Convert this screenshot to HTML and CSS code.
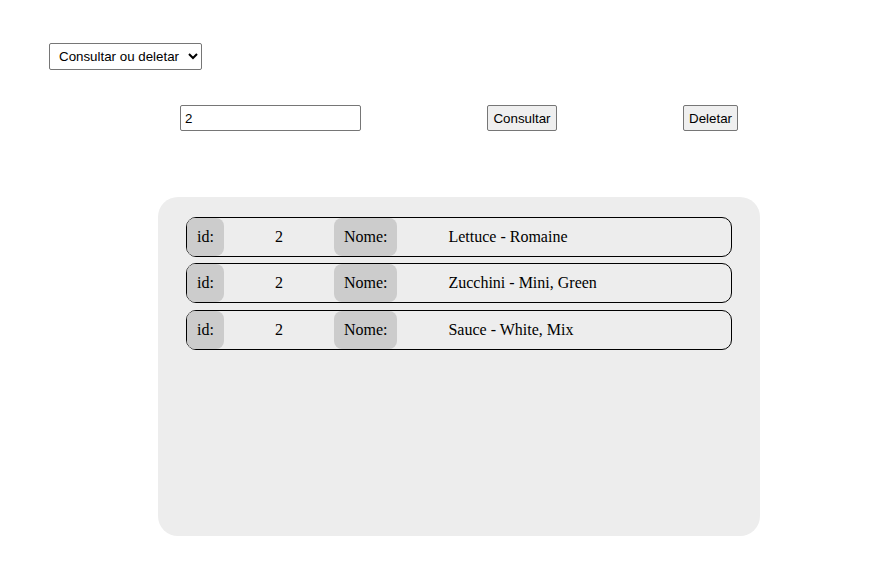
FILE: index.html
```html
<!DOCTYPE html>
<html>
<head>
<meta charset="utf-8">
<link rel="stylesheet" href="styles.css">
</head>
<body>
<div class="top">
  <select class="mode">
    <option>Consultar ou deletar</option>
  </select>
</div>
<div class="controls">
  <input class="idinput" type="text" value="2">
  <button class="btn">Consultar</button>
  <button class="btn">Deletar</button>
</div>
<div class="panel">
  <div class="row">
    <span class="label">id:</span>
    <span class="val">2</span>
    <span class="label">Nome:</span>
    <span class="name">Lettuce - Romaine</span>
  </div>
  <div class="row">
    <span class="label">id:</span>
    <span class="val">2</span>
    <span class="label">Nome:</span>
    <span class="name">Zucchini - Mini, Green</span>
  </div>
  <div class="row">
    <span class="label">id:</span>
    <span class="val">2</span>
    <span class="label">Nome:</span>
    <span class="name">Sauce - White, Mix</span>
  </div>
</div>
</body>
</html>
```
FILE: styles.css
```css
html, body {
  margin: 0;
  padding: 0;
  background: #fff;
}
body {
  font-family: "Liberation Serif", serif;
  font-size: 16px;
  color: #000;
}
.top {
  padding: 43px 0 0 49px;
}
.mode {
  font-family: "Liberation Sans", Arial, sans-serif;
  font-size: 13.33px;
  height: 27px;
  width: 153px;
  padding: 0 2px 0 5px;
  border: 1px solid #767676;
  border-radius: 2px;
  background: #fff;
  color: #000;
}
.controls {
  display: flex;
  justify-content: space-between;
  align-items: center;
  width: 558px;
  margin: 35px 0 0 158px;
  padding: 0 22px;
}
.idinput {
  box-sizing: border-box;
  width: 181px;
  height: 26px;
  font-family: "Liberation Sans", Arial, sans-serif;
  font-size: 13.33px;
  padding: 0 4px;
  border: 1px solid #767676;
  border-radius: 2px;
}
.btn {
  box-sizing: border-box;
  height: 26px;
  font-family: "Liberation Sans", Arial, sans-serif;
  font-size: 13.33px;
  padding: 0 5px;
  border: 1px solid #767676;
  border-radius: 2px;
  background: #efefef;
  color: #000;
}
.panel {
  box-sizing: border-box;
  width: 602px;
  height: 339px;
  margin: 66px 0 0 158px;
  background: #ededed;
  border-radius: 20px;
  padding: 20px 28px;
  display: flex;
  flex-direction: column;
  gap: 6px;
}
.row {
  display: flex;
  height: 38px;
  border: 1px solid #000;
  border-radius: 10px;
  line-height: 38px;
}
.row + .row + .row { margin-top: 1px; }
.label {
  background: #cccccc;
  border-radius: 8px;
  padding: 0 10px;
}
.val {
  width: 110px;
  text-align: center;
}
.name {
  padding-left: 51px;
}
```
